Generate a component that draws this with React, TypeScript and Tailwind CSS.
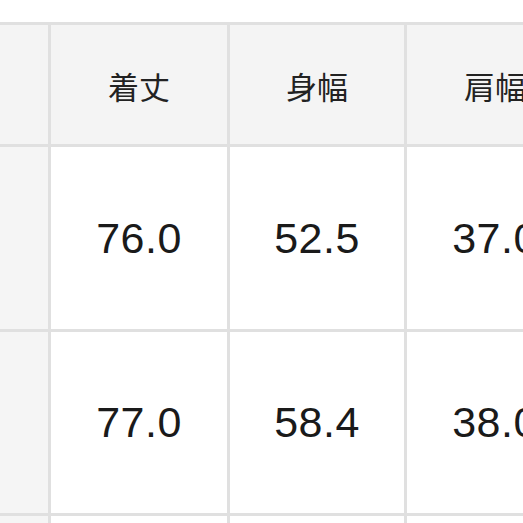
import React from 'react';

const headers = ['着丈', '身幅', '肩幅'];
const rows = [
  ['76.0', '52.5', '37.0'],
  ['77.0', '58.4', '38.0'],
  ['', '', ''],
];

const cjk = {fontFamily: '"Noto Sans CJK JP", "Noto Sans", sans-serif'};
const num = {fontFamily: '"Liberation Sans", Arial, sans-serif'};

export default function App() {
  return (
    <div className="h-[523px] w-[523px] overflow-hidden bg-white pt-[22px]">
      <div className="grid w-[620px] grid-cols-[48px_176px_174px_176px] grid-rows-[119px_182px_181px_60px] gap-[3px] bg-[#e0e0e0] pt-[3px]">
        <div className="bg-[#f4f4f4]" />
        {headers.map((h) => (
          <div key={h} className="flex items-center justify-center bg-[#f4f4f4] pt-1 text-[31px] text-[#222]" style={cjk}>
            {h}
          </div>
        ))}
        {rows.map((r, i) => (
          <React.Fragment key={i}>
            <div className="bg-[#f5f5f5]" />
            {r.map((v, j) => (
              <div key={j} className="flex items-center justify-center bg-white text-[43px] tracking-[0.5px] text-[#1a1a1a]" style={num}>
                {v}
              </div>
            ))}
          </React.Fragment>
        ))}
      </div>
    </div>
  );
}
